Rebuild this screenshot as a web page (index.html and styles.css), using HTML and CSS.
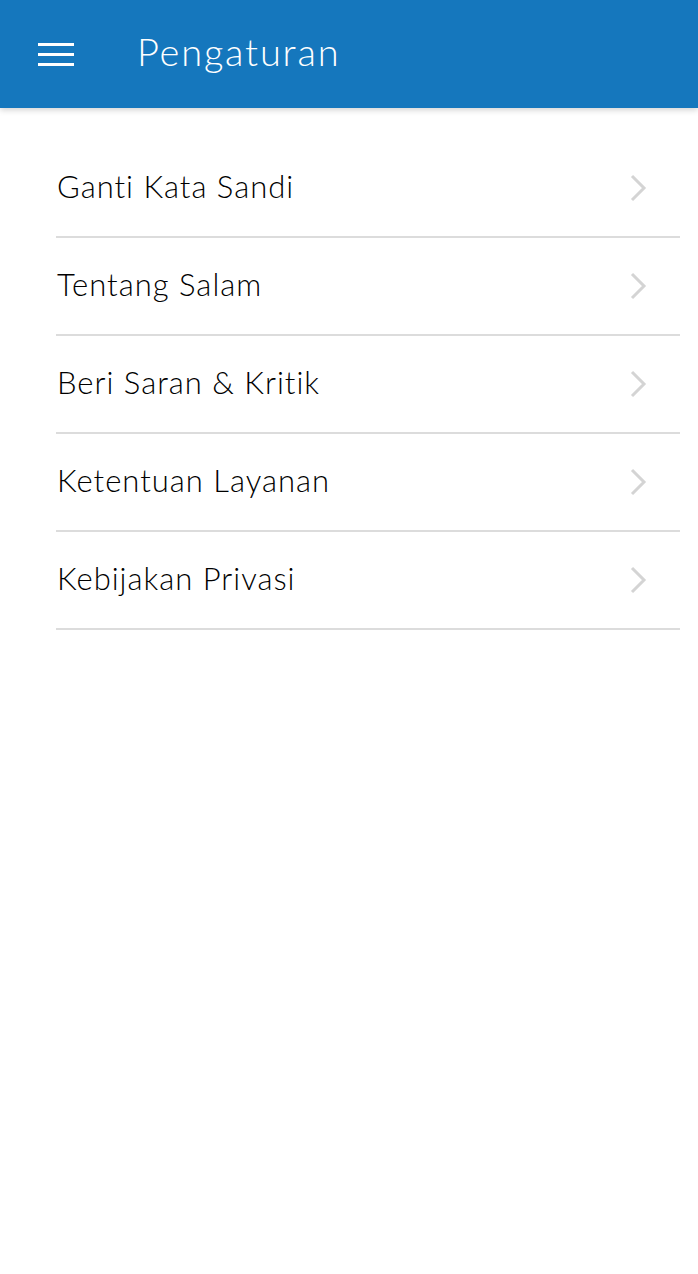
FILE: index.html
```html
<!DOCTYPE html>
<html lang="id">
<head>
<meta charset="UTF-8" />
<meta name="viewport" content="width=device-width, initial-scale=1" />
<title>Pengaturan</title>
<link rel="stylesheet" href="styles.css">
</head>
<body>

<header class="topbar">
  <button class="menu-btn" aria-label="Menu">
    <svg width="36" height="24" viewBox="0 0 36 24">
      <rect x="0" y="1" width="36" height="3" fill="#fff"/>
      <rect x="0" y="11" width="36" height="3" fill="#fff"/>
      <rect x="0" y="21" width="36" height="3" fill="#fff"/>
    </svg>
  </button>
  <h1 class="title">Pengaturan</h1>
</header>

<ul class="settings">
  <li class="item"><span>Ganti Kata Sandi</span><svg class="chev" width="18" height="30" viewBox="0 0 18 30"><path d="M3 3 L15 15 L3 27" fill="none" stroke="#d4d4d4" stroke-width="3"/></svg></li>
  <li class="item"><span>Tentang Salam</span><svg class="chev" width="18" height="30" viewBox="0 0 18 30"><path d="M3 3 L15 15 L3 27" fill="none" stroke="#d4d4d4" stroke-width="3"/></svg></li>
  <li class="item"><span>Beri Saran &amp; Kritik</span><svg class="chev" width="18" height="30" viewBox="0 0 18 30"><path d="M3 3 L15 15 L3 27" fill="none" stroke="#d4d4d4" stroke-width="3"/></svg></li>
  <li class="item"><span>Ketentuan Layanan</span><svg class="chev" width="18" height="30" viewBox="0 0 18 30"><path d="M3 3 L15 15 L3 27" fill="none" stroke="#d4d4d4" stroke-width="3"/></svg></li>
  <li class="item"><span>Kebijakan Privasi</span><svg class="chev" width="18" height="30" viewBox="0 0 18 30"><path d="M3 3 L15 15 L3 27" fill="none" stroke="#d4d4d4" stroke-width="3"/></svg></li>
</ul>

</body>
</html>
```

FILE: styles.css
```css
body {
  margin: 0;
  background: #fff;
  font-family: Lato, 'Noto Sans', sans-serif;
  color: #000;
}

.topbar {
  height: 108px;
  background: #1577bd;
  display: flex;
  align-items: center;
  box-shadow: 0 2px 6px rgba(0,0,0,0.18);
  position: relative;
}

.menu-btn {
  background: none;
  border: none;
  padding: 0;
  margin-left: 38px;
  width: 36px;
  height: 24px;
  display: flex;
}

.title {
  margin: 0 0 6px 63px;
  color: #fff;
  font-size: 38px;
  font-weight: 300;
  letter-spacing: 1.8px;
}

.settings {
  list-style: none;
  margin: 32px 18px 0 56px;
  padding: 0;
}

/* each row is 98px tall including its 2px divider */
.item {
  box-sizing: border-box;
  height: 98px;
  padding: 0 33px 4px 1px;
  border-bottom: 2px solid #dcdcdc;
  display: flex;
  align-items: center;
  justify-content: space-between;
  font-size: 31px;
  font-weight: 300;
  letter-spacing: 1px;
}

.chev {
  display: block;
  margin-top: 4px;
}
```
